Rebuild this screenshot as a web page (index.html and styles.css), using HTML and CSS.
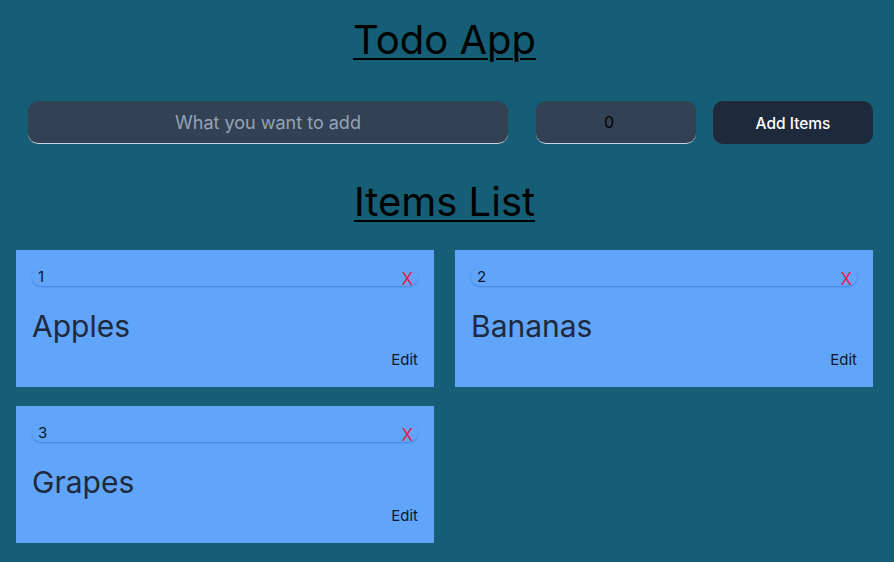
FILE: index.html
```html
<!DOCTYPE html>
<html lang="en">
<head>
<meta charset="utf-8">
<title>Todo App</title>
<link rel="stylesheet" href="styles.css">
</head>
<body>
<main class="app">
  <h1 class="title">Todo App</h1>
  <form class="add-row">
    <input class="text-input" type="text" placeholder="What you want to add">
    <input class="num-input" type="text" value="0">
    <button class="add-btn" type="button">Add Items</button>
  </form>
  <h2 class="title list-title">Items List</h2>
  <section class="grid">
    <article class="card">
      <div class="card-head"><span class="num">1</span><span class="del">X</span></div>
      <div class="name">Apples</div>
      <div class="edit-row"><span class="edit">Edit</span></div>
    </article>
    <article class="card">
      <div class="card-head"><span class="num">2</span><span class="del">X</span></div>
      <div class="name">Bananas</div>
      <div class="edit-row"><span class="edit">Edit</span></div>
    </article>
    <article class="card">
      <div class="card-head"><span class="num">3</span><span class="del">X</span></div>
      <div class="name">Grapes</div>
      <div class="edit-row"><span class="edit">Edit</span></div>
    </article>
  </section>
</main>
</body>
</html>
```
FILE: styles.css
```css
* { box-sizing: border-box; }
html, body { margin: 0; padding: 0; }
body {
  background: #155e75;
  font-family: Inter, "Noto Sans", sans-serif;
  color: #000;
  width: 894px;
  height: 562px;
  overflow: hidden;
}
.app { display: flex; flex-direction: column; }
.title {
  margin: 16px 0 0;
  padding-right: 5px;
  text-align: center;
  font-size: 40px;
  line-height: 48px;
  font-weight: 400;
  text-decoration: underline;
  text-decoration-thickness: 2px;
  text-underline-offset: 4px;
  color: #000;
}
.add-row {
  display: flex;
  margin: 37px 0 0;
  padding: 0 21px 0 28px;
  height: 43px;
}
.text-input, .num-input {
  background: #334155;
  border: none;
  border-bottom: 1px solid #cbd5e1;
  border-radius: 10px;
  height: 43px;
  font-family: Inter, sans-serif;
  font-size: 16px;
  text-align: center;
  color: #000;
  outline: none;
}
.text-input { width: 480px; font-size: 18px; padding: 0; }
.text-input::placeholder { color: #94a3b8; }
.num-input { width: 160px; margin-left: 28px; padding: 0 14px 0 0; }
.add-btn {
  width: 160px;
  margin-left: 17px;
  height: 43px;
  border: none;
  border-radius: 10px;
  background: #1e293b;
  color: #fff;
  font-family: Inter, sans-serif;
  font-size: 15.5px;
  font-weight: 500;
  padding: 2px 0 0;
}
.list-title { margin-top: 34px; }
.grid {
  display: grid;
  grid-template-columns: 418px 418px;
  column-gap: 21px;
  row-gap: 19px;
  padding: 0 16px;
  margin-top: 24px;
}
.card {
  background: #60a5fa;
  padding: 18px 16px 17px;
  height: 137px;
  display: flex;
  flex-direction: column;
}
.card-head {
  height: 18px;
  border-radius: 9px;
  box-shadow: 0 1px 2px rgba(30, 64, 175, 0.35);
  display: flex;
  justify-content: space-between;
  align-items: center;
  padding: 0 5px 0 6px;
  font-size: 15px;
  line-height: 18px;
}
.num { color: #0f172a; }
.del { color: #e11d48; font-size: 17px; margin-top: 3px; }
.name {
  margin-top: 22px;
  font-size: 30px;
  line-height: 36px;
  color: #1e293b;
}
.edit-row {
  margin-top: 6px;
  display: flex;
  justify-content: flex-end;
  font-size: 15px;
  line-height: 20px;
  color: #0f172a;
}
```
